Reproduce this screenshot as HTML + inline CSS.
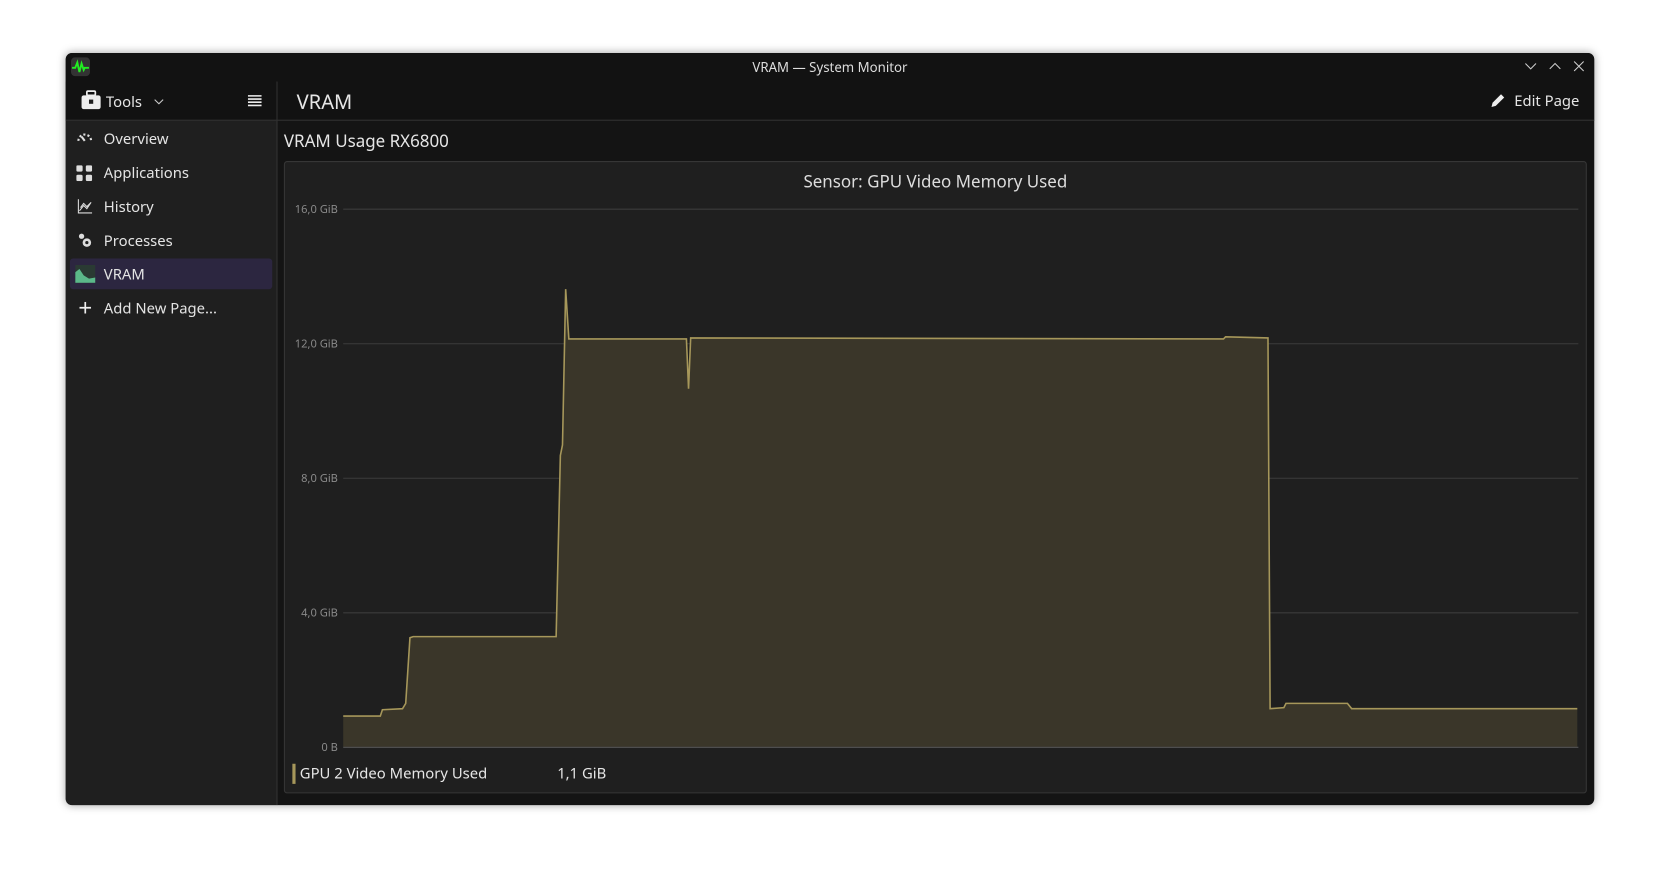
<!DOCTYPE html>
<html><head><meta charset="utf-8"><style>
html,body{margin:0;padding:0;background:#fff;width:1661px;height:883px;overflow:hidden}
#s{position:absolute;left:0;top:0;width:1568px;height:834px;transform:scale(1.0593);transform-origin:0 0;font-family:"Noto Sans","Liberation Sans",sans-serif;color:#e6e6e6}
.win{position:absolute;left:62px;top:50px;width:1443px;height:710px;background:#141414;border-radius:6px;box-shadow:0 0 8px rgba(0,0,0,.35);overflow:hidden}
.tb{position:absolute;left:0;top:0;right:0;height:27px;background:#121212;font-size:12.5px;text-align:center;line-height:27px;color:#ddd}
.side{position:absolute;left:0;top:27px;width:199px;bottom:0;background:#1f1f1f;border-right:1px solid #333}
.sh{height:36px;background:#121212;border-bottom:1px solid #333;position:relative}
.item{position:absolute;left:36px;font-size:14px;color:#e4e4e4}
.hdr{position:absolute;left:200px;top:27px;right:0;height:36px;border-bottom:1px solid #333;background:#121212}
.panel{position:absolute;left:206px;top:102px;width:1228px;height:595px;background:#1f1f1f;border:1px solid #363636;border-radius:3px}
.ax{position:absolute;font-size:10.5px;color:#8a8a8a;text-align:right;width:50px}
</style></head><body><div id="s">
<div class="win">
 <div class="tb">VRAM — System Monitor
  <svg style="position:absolute;left:5px;top:4px" width="18" height="18" viewBox="0 0 18 18"><rect width="18" height="18" rx="4" fill="#333"/><path d="M1 10h3l2-5 2 9 2-8 2 6 1-2h4" stroke="#2e2" stroke-width="1.8" fill="none"/></svg>
  <svg style="position:absolute;right:54px;top:9px" width="12" height="8"><path d="M1 1l5 5 5-5" stroke="#ccc" fill="none"/></svg>
  <svg style="position:absolute;right:31px;top:8px" width="12" height="8"><path d="M1 7l5-5 5 5" stroke="#ccc" fill="none"/></svg>
  <svg style="position:absolute;right:9px;top:7px" width="11" height="11"><path d="M1 1l9 9M10 1l-9 9" stroke="#ccc"/></svg>
 </div>
 <div class="side">
  <div class="sh">
   <svg style="position:absolute;left:14px;top:8px" width="20" height="19" viewBox="0 0 20 19"><rect x="6" y="1" width="8" height="4" rx="1" fill="none" stroke="#eee" stroke-width="1.6"/><rect x="1" y="5" width="18" height="13" rx="2" fill="#eee"/><rect x="8" y="9" width="4" height="4" fill="#1f1f1f"/></svg>
   <span style="position:absolute;left:38px;top:10px;font-size:14px">Tools</span>
   <svg style="position:absolute;left:83px;top:16px" width="10" height="6"><path d="M1 1l4 4 4-4" stroke="#ccc" fill="none"/></svg>
   <svg style="position:absolute;left:172px;top:12px" width="13" height="13"><path d="M0 1.5h13M0 4.5h13M0 7.5h13M0 10.5h13" stroke="#eee" stroke-width="1.5"/></svg>
  </div>
  <svg style="position:absolute;left:10px;top:46px" width="16" height="14"><path d="M2 10a6 6 0 0 1 12 0" stroke="#ddd" stroke-width="2" stroke-dasharray="2 2" fill="none"/><path d="M8 10l-3-4" stroke="#ddd" stroke-width="2"/></svg>
  <div class="item" style="top:45px">Overview</div>
  <svg style="position:absolute;left:10px;top:79px" width="15" height="15"><rect x="0" y="0" width="6" height="6" rx="1.5" fill="#ddd"/><rect x="9" y="0" width="6" height="6" rx="1.5" fill="#ddd"/><rect x="0" y="9" width="6" height="6" rx="1.5" fill="#ddd"/><rect x="9" y="9" width="6" height="6" rx="1.5" fill="#ddd"/></svg>
  <div class="item" style="top:77px">Applications</div>
  <svg style="position:absolute;left:11px;top:111px" width="14" height="14"><path d="M1 0v13h13M2 11l4-5 3 3 4-6M3 8l3-4 3 3 4-4" stroke="#ddd" fill="none"/></svg>
  <div class="item" style="top:109px">History</div>
  <svg style="position:absolute;left:11px;top:143px" width="14" height="14"><circle cx="4" cy="3" r="2.5" fill="#ddd"/><circle cx="9" cy="9" r="4" fill="#ddd"/><circle cx="9" cy="9" r="1.5" fill="#1f1f1f"/></svg>
  <div class="item" style="top:141px">Processes</div>
  <div style="position:absolute;left:4px;top:167px;width:191px;height:29px;background:#2c2640;border-radius:3px"></div>
  <svg style="position:absolute;left:9px;top:173px" width="19" height="17"><rect width="19" height="17" fill="#2a3a33"/><path d="M0 17V7l4-3 4 6 5 3 6-1v5z" fill="#5bb88a"/></svg>
  <div class="item" style="top:173px">VRAM</div>
  <svg style="position:absolute;left:13px;top:208px" width="11" height="11"><path d="M5.5 0v11M0 5.5h11" stroke="#eee" stroke-width="1.6"/></svg>
  <div class="item" style="top:205px">Add New Page...</div>
 </div>
 <div class="hdr">
  <span style="position:absolute;left:18px;top:6px;font-size:19px">VRAM</span>
  <svg style="position:absolute;right:84px;top:11px" width="14" height="14"><path d="M1 13l1-4 8-8 3 3-8 8z" fill="#eee"/></svg>
  <span style="position:absolute;right:14px;top:9px;font-size:14px">Edit Page</span>
 </div>
 <div style="position:absolute;left:206px;top:72px;font-size:16px">VRAM Usage RX6800</div>
 <div class="panel">
  <div style="position:absolute;left:0;right:0;top:7px;text-align:center;font-size:16px;color:#ddd">Sensor: GPU Video Memory Used</div>
  <div class="ax" style="left:0;top:38px">16,0 GiB</div>
  <div class="ax" style="left:0;top:165px">12,0 GiB</div>
  <div class="ax" style="left:0;top:292px">8,0 GiB</div>
  <div class="ax" style="left:0;top:419px">4,0 GiB</div>
  <div class="ax" style="left:0;top:546px">0 B</div>
  <div style="position:absolute;left:7px;top:568px;width:3px;height:19px;background:#a6975a"></div>
  <div style="position:absolute;left:14px;top:568px;font-size:14px">GPU 2 Video Memory Used</div>
  <div style="position:absolute;left:257px;top:568px;font-size:14px">1,1 GiB</div>
 </div>
 <svg style="position:absolute;left:0;top:0" width="1443" height="710" viewBox="62 50 1443 710">
  <g stroke="#3c3c3c" stroke-width="1"><path d="M324 197.5H1490M324 324.5H1490M324 451.5H1490M324 578.5H1490"/></g>
  <path d="M324 676L359 676 361 670 380 669 383 664 387 602 390 601 525 601 529 430 531 420 534 273 537 320 648 320 650 367 652 319 1155 320 1157 318 1197 319 1199 669 1212 668 1214 664 1272 664 1276 669 1489 669 1489 705 324 705Z" fill="#3a3629"/>
  <path d="M324 676L359 676 361 670 380 669 383 664 387 602 390 601 525 601 529 430 531 420 534 273 537 320 648 320 650 367 652 319 1155 320 1157 318 1197 319 1199 669 1212 668 1214 664 1272 664 1276 669 1489 669" fill="none" stroke="#a6975a" stroke-width="1.5"/>
  <path d="M324 705.5H1490" stroke="#555"/>
 </svg>
</div>
</div></body></html>
